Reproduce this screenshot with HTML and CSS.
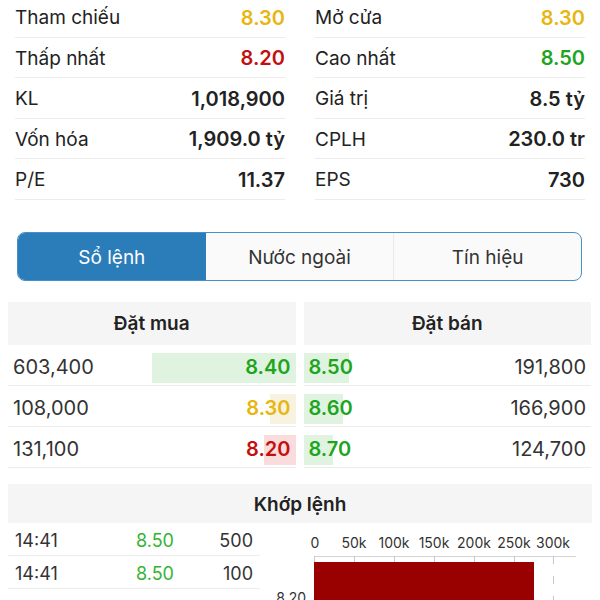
FILE: index.html
```html
<!DOCTYPE html>
<html lang="vi">
<head>
  <meta charset="UTF-8">
  <meta name="viewport" content="width=device-width, initial-scale=1.0">
  <title>Chi tiết cổ phiếu</title>
  <link rel="stylesheet" href="styles.css">
</head>
<body>
  <div class="page">
    <section class="info-grid">
      <div class="info-row"><span>Tham chiếu</span><b class="ref">8.30</b></div>
      <div class="info-row"><span>Mở cửa</span><b class="ref">8.30</b></div>
      <div class="info-row"><span>Thấp nhất</span><b class="down">8.20</b></div>
      <div class="info-row"><span>Cao nhất</span><b class="up">8.50</b></div>
      <div class="info-row"><span>KL</span><b>1,018,900</b></div>
      <div class="info-row"><span>Giá trị</span><b>8.5 tỷ</b></div>
      <div class="info-row"><span>Vốn hóa</span><b>1,909.0 tỷ</b></div>
      <div class="info-row"><span>CPLH</span><b>230.0 tr</b></div>
      <div class="info-row"><span>P/E</span><b>11.37</b></div>
      <div class="info-row"><span>EPS</span><b>730</b></div>
    </section>

    <nav class="segments">
      <div class="segment active">Sổ lệnh</div>
      <div class="segment">Nước ngoài</div>
      <div class="segment">Tín hiệu</div>
    </nav>

    <section class="book">
      <div class="book-side">
        <div class="panel-head">Đặt mua</div>
        <div class="book-row bid">
          <span class="bar up-bg" style="width: 144px"></span>
          <span class="qty">603,400</span><b class="price up">8.40</b>
        </div>
        <div class="book-row bid">
          <span class="bar ref-bg" style="width: 26px"></span>
          <span class="qty">108,000</span><b class="price ref">8.30</b>
        </div>
        <div class="book-row bid">
          <span class="bar down-bg" style="width: 32px"></span>
          <span class="qty">131,100</span><b class="price down">8.20</b>
        </div>
      </div>
      <div class="book-side">
        <div class="panel-head">Đặt bán</div>
        <div class="book-row ask">
          <span class="bar up-bg" style="width: 45px"></span>
          <b class="price up">8.50</b><span class="qty">191,800</span>
        </div>
        <div class="book-row ask">
          <span class="bar up-bg" style="width: 39px"></span>
          <b class="price up">8.60</b><span class="qty">166,900</span>
        </div>
        <div class="book-row ask">
          <span class="bar up-bg" style="width: 29px"></span>
          <b class="price up">8.70</b><span class="qty">124,700</span>
        </div>
      </div>
    </section>

    <section class="matches">
      <div class="panel-head">Khớp lệnh</div>
      <div class="matches-body">
        <div class="trades">
          <div class="trade-row"><span>14:41</span><span class="up">8.50</span><span>500</span></div>
          <div class="trade-row"><span>14:41</span><span class="up">8.50</span><span>100</span></div>
        </div>
        <svg class="chart" width="330" height="77" viewBox="0 0 330 77">
          <g class="axis-labels">
            <text x="53" y="25">0</text>
            <text x="92" y="25">50k</text>
            <text x="132" y="25">100k</text>
            <text x="172" y="25">150k</text>
            <text x="212" y="25">200k</text>
            <text x="252" y="25">250k</text>
            <text x="291" y="25">300k</text>
          </g>
          <line x1="52" y1="33.5" x2="314" y2="33.5" stroke="#d4d4d4"/>
          <g stroke="#c8c8c8">
            <line x1="52.5" y1="33" x2="52.5" y2="40"/>
            <line x1="92.5" y1="33" x2="92.5" y2="40"/>
            <line x1="132.5" y1="33" x2="132.5" y2="40"/>
            <line x1="172.5" y1="33" x2="172.5" y2="40"/>
            <line x1="212.5" y1="33" x2="212.5" y2="40"/>
            <line x1="252.5" y1="33" x2="252.5" y2="40"/>
            <line x1="291.5" y1="33" x2="291.5" y2="77" stroke-dasharray="8 12"/>
          </g>
          <rect x="52" y="39" width="220" height="40" fill="#990000"/>
          <text class="bar-label" x="44" y="80">8.20</text>
        </svg>
      </div>
    </section>
  </div>
</body>
</html>
```

FILE: styles.css
```css
:root {
  --text: #222222;
  --muted-text: #444444;
  --line: #ececec;
  --panel: #f5f5f5;
  --blue: #2a7db9;
  --blue-border: #4a8fc6;
  --up: #1ea51e;
  --ref: #e7b60f;
  --down: #c30f0f;
}

* {
  margin: 0;
  padding: 0;
  box-sizing: border-box;
}

body {
  font-family: Inter, "Noto Sans", sans-serif;
  color: var(--text);
  background: #ffffff;
  overflow: hidden;
}

.page {
  width: 600px;
}

.info-grid {
  display: grid;
  grid-template-columns: 1fr 1fr;
  column-gap: 30px;
  padding: 0 15px;
  margin-top: -3px;
}

.info-row {
  display: flex;
  justify-content: space-between;
  align-items: center;
  height: 40.5px;
  padding-top: 2px;
  border-bottom: 1px solid var(--line);
  font-size: 19px;
}

.info-row b {
  font-size: 20px;
  font-weight: 600;
}

.up { color: var(--up); }
.ref { color: var(--ref); }
.down { color: var(--down); }

.segments {
  display: grid;
  grid-template-columns: repeat(3, 1fr);
  margin: 32px 18px 0 17px;
  height: 49px;
  border: 1.5px solid var(--blue-border);
  border-radius: 8px;
  overflow: hidden;
  background: #fafafa;
}

.segment {
  display: flex;
  align-items: center;
  justify-content: center;
  padding-top: 3px;
  font-size: 19px;
  color: #333333;
  border-left: 1px solid #eaeaea;
}

.segment.active {
  background: var(--blue);
  color: #ffffff;
  border-left: none;
}

.segment.active + .segment {
  border-left: none;
}

.book {
  display: grid;
  grid-template-columns: 1fr 1fr;
  column-gap: 8px;
  margin: 21px 9px 0 8px;
}

.panel-head {
  display: flex;
  align-items: center;
  justify-content: center;
  height: 43px;
  background: var(--panel);
  font-size: 19px;
  font-weight: 600;
}

.book-row {
  position: relative;
  display: flex;
  justify-content: space-between;
  align-items: center;
  height: 41px;
  padding: 4px 5px 0;
  border-bottom: 1px solid var(--line);
  font-size: 20px;
}

.book-row .qty {
  color: #333333;
}

.book-row .price {
  position: relative;
  font-weight: 600;
}

.bar {
  position: absolute;
  top: 8px;
  height: 30px;
}

.bid .bar { right: 0; }
.ask .bar { left: 0; }

.up-bg { background: #e0f3e0; }
.ref-bg { background: #f8f3e1; }
.down-bg { background: #fbdcdc; }

.matches {
  margin: 16px 8px 0 8px;
}

.matches .panel-head {
  height: 39px;
  padding-top: 2px;
}

.matches-body {
  display: flex;
}

.trades {
  width: 252px;
  flex-shrink: 0;
}

.trade-row {
  display: grid;
  grid-template-columns: 110px 60px 1fr;
  align-items: center;
  height: 33px;
  padding: 4px 7px 0;
  border-bottom: 1px solid var(--line);
  font-size: 18px;
  color: #333333;
}

.trade-row span:nth-child(2) {
  text-align: center;
  color: #34b434;
}

.trade-row span:nth-child(3) {
  text-align: right;
}

.chart {
  display: block;
  margin-left: 2px;
}

.axis-labels text {
  font-family: Inter, sans-serif;
  font-size: 14px;
  fill: #333333;
  text-anchor: middle;
}

.bar-label {
  font-family: Inter, sans-serif;
  font-size: 14px;
  fill: #333333;
  text-anchor: end;
}
```
